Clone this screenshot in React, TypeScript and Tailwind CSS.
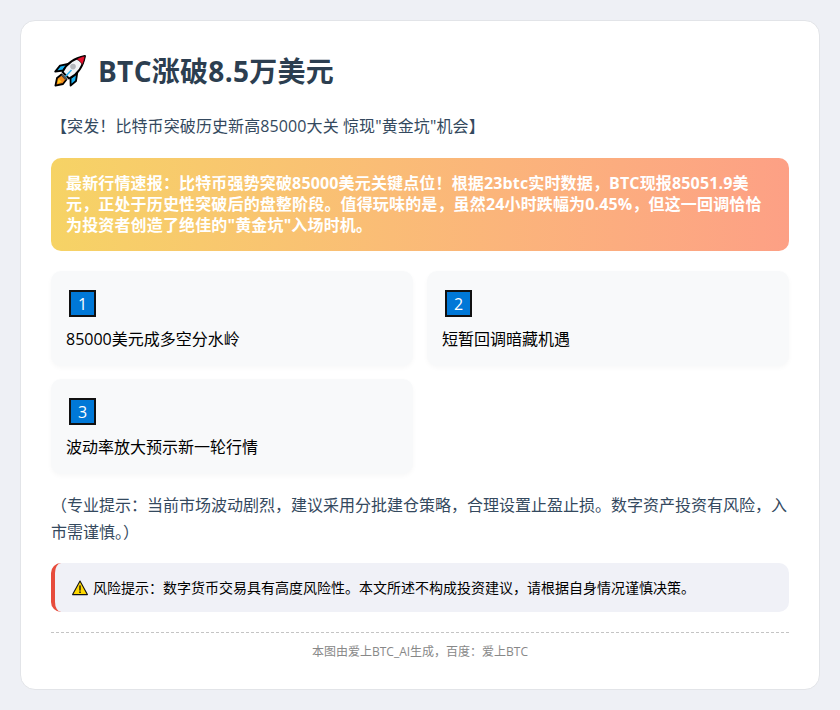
const FONT = "font-['Open_Sans','Noto_Sans_CJK_SC',sans-serif]";

function Rocket() {
  return (
    <svg width="32" height="32" viewBox="0 0 32 32" className="ml-[3px] shrink-0">
      <path d="M1.4 30.6 L3 23 L7.5 19.5 L12.5 24.5 L9 29 Z" fill="#f28a1c" stroke="#000" strokeWidth="1.8" strokeLinejoin="round" />
      <path d="M3.6 28.4 L4.6 24 L7.6 26.6 Z" fill="#ffd21f" />
      <path d="M9 15.5 L1.2 16.6 L6 10.6 L14 9 Z" fill="#17b0f0" stroke="#000" strokeWidth="1.8" strokeLinejoin="round" />
      <path d="M16.5 23 L16.6 30.6 L22 26 L23.2 18 Z" fill="#17b0f0" stroke="#000" strokeWidth="1.8" strokeLinejoin="round" />
      <path d="M8.5 17 C12 9.5 20 3 31 1 C29 12 22.5 20 15 23.5 Z" fill="#f2f4f6" stroke="#000" strokeWidth="1.8" strokeLinejoin="round" />
      <path d="M22.4 4.2 C24.8 5 27.4 7.4 28.2 10.2 C29.6 7.4 30.5 4.2 31 1 C28 1.5 25 2.7 22.4 4.2 Z" fill="#e8112d" stroke="#000" strokeWidth="0.6" strokeLinejoin="round" />
      <circle cx="19" cy="11.6" r="2.8" fill="#b4b8bd" />
      <path d="M10.5 22.5 L17.5 15" stroke="#2bb5f2" strokeWidth="1.5" />
      <path d="M8 19.5 L12.5 24.5" stroke="#555" strokeWidth="2.4" />
    </svg>
  );
}

function Warning() {
  return (
    <svg width="16" height="16" viewBox="0 0 16 16" className="shrink-0">
      <path d="M8 1 L15.4 14.6 H0.6 Z" fill="#ffd800" stroke="#111" strokeWidth="1.1" strokeLinejoin="round" />
      <rect x="7.3" y="5.4" width="1.4" height="5.2" fill="#111" />
      <rect x="7.3" y="11.4" width="1.4" height="1.6" fill="#111" />
    </svg>
  );
}

function Point({ n, text }: { n: string; text: string }) {
  return (
    <div className="h-[95px] rounded-[10px] bg-[#f8f9fa] pl-[15px] pt-[19px] shadow-[0_2px_5px_rgba(0,0,0,0.03)]">
      <div className="ml-[3px] flex h-[27px] w-[27px] items-center justify-center border-2 border-[#111] bg-[#0078d7] text-[16px] text-white">
        {n}
      </div>
      <div className="mt-[10px] text-[16px] leading-[24px] text-black">{text}</div>
    </div>
  );
}

export default function App() {
  return (
    <div className={`${FONT} h-[710px] w-[840px] bg-[#eef0f5] p-5`}>
      <div className="h-[670px] rounded-[15px] border border-[#e2e4e8] bg-white px-[30px] pt-[30px]">
        <div className="flex h-[40px] items-center gap-[12px]">
          <Rocket />
          <h1 className="text-[28px] font-bold leading-[40px] tracking-[0.3px] text-[#2c3e50]">BTC涨破8.5万美元</h1>
        </div>
        <p className="mt-[23px] text-[16px] leading-[24px] tracking-[0.1px] text-[#34495e]">【突发！比特币突破历史新高85000大关 惊现"黄金坑"机会】</p>
        <div className="mt-[20px] h-[93px] rounded-[10px] bg-gradient-to-r from-[#f6d365] to-[#fda085] pl-[15px] pr-[27px] pt-[15px] text-[16px] font-bold leading-[1.3] tracking-[0.15px] text-white">
          最新行情速报：比特币强势突破85000美元关键点位！根据23btc实时数据，BTC现报85051.9美元，正处于历史性突破后的盘整阶段。值得玩味的是，虽然24小时跌幅为0.45%，但这一回调恰恰为投资者创造了绝佳的"黄金坑"入场时机。
        </div>
        <div className="mt-[20px] grid grid-cols-2 gap-x-[14px] gap-y-[13px]">
          <Point n="1" text="85000美元成多空分水岭" />
          <Point n="2" text="短暂回调暗藏机遇" />
          <Point n="3" text="波动率放大预示新一轮行情" />
        </div>
        <p className="mt-[18px] text-[16px] leading-[27px] text-[#34495e]">（专业提示：当前市场波动剧烈，建议采用分批建仓策略，合理设置止盈止损。数字资产投资有风险，入市需谨慎。）</p>
        <div className="mt-[17px] flex h-[49px] items-center gap-[5px] rounded-[10px] border-l-4 border-[#e74c3c] bg-[#f0f1f7] pl-[17px] text-[14px] text-black">
          <Warning />
          <span>风险提示：数字货币交易具有高度风险性。本文所述不构成投资建议，请根据自身情况谨慎决策。</span>
        </div>
        <div className="mt-[20px] border-t border-dashed border-[#c4c4c4] pt-[11px] text-center text-[12px] leading-[16px] text-[#888888]">
          本图由爱上BTC_AI生成，百度：爱上BTC
        </div>
      </div>
    </div>
  );
}
